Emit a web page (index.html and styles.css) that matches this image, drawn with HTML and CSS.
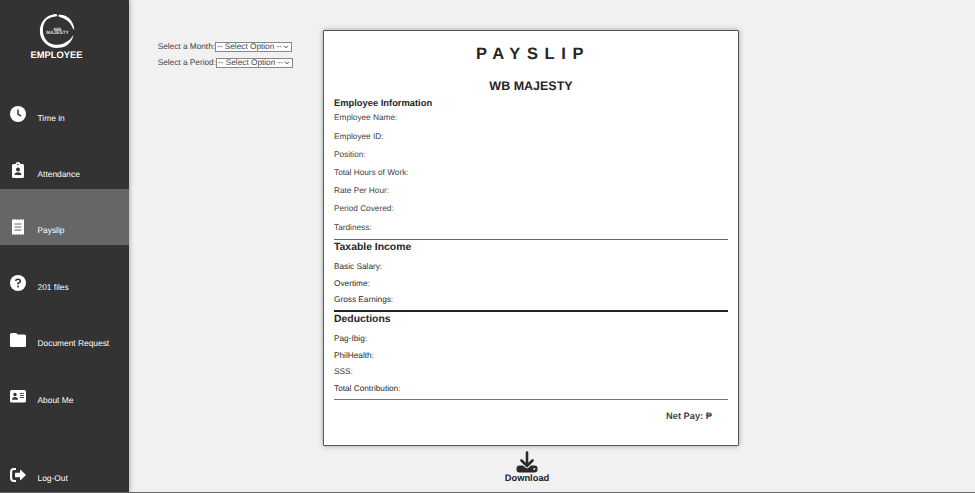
FILE: index.html
```html
<!DOCTYPE html>
<html lang="en">
<head>
<meta charset="utf-8">
<title>Payslip</title>
<link rel="stylesheet" href="styles.css">
</head>
<body>
<aside class="sidebar">
  <div class="brand">
    <svg class="logo" viewBox="0 0 36 36">
      <path fill="#fff" d="M18 .2L15 0 14 .6Q8 2 5 5.500Q1 10 .4 16Q.2 23 3.500 27.500Q9 34.500 17 35L20 34.700Q26 34.500 29.500 31Q34 27 35 21.500Q32 26.500 28 28.500Q24 31.500 19 31.500Q11 32 7 27Q3 22 3.500 15Q4 9 8 5.500Q12 2.500 18 2.200ZM19.500 .8Q26 0 31 5Q35.500 10 35.800 16.500L34 14.500Q32 9 28 6.500Q25 4 19.500 2.500Z"/>
      <text x="18.500" y="17.200">WB</text><text x="18.500" y="21">MAJESTY</text>
    </svg>
    <div class="role">EMPLOYEE</div>
  </div>
  <nav>
    <a class="item"><svg class="icon" viewBox="0 0 16 16"><circle cx="8" cy="8" r="8" fill="#fff"/><path d="M8 3.500V8l3 2.200" fill="none" stroke="#333" stroke-width="1.500"/></svg><span>Time in</span></a>
    <a class="item"><svg class="icon" viewBox="0 0 16 16"><path fill="#fff" d="M3.500 2H5.500Q6 0 8 0t2.500 2h2Q14 2 14 3.500v11q0 1.500-1.500 1.500h-9Q2 16 2 14.500v-11Q2 2 3.500 2Z"/><circle cx="8" cy="2.500" r=".8" fill="#333"/><circle cx="8" cy="7.500" r="2" fill="#333"/><path d="M4.500 13q.3-2.800 3.500-2.800T11.500 13Z" fill="#333"/></svg><span>Attendance</span></a>
    <a class="item active"><svg class="icon" viewBox="0 0 16 16"><path fill="#fff" d="M2 0l1.500 1L5 0l1.500 1L8 0l1.500 1L11 0l1.500 1L14 0v16l-1.500-1-1.500 1-1.500-1L8 16l-1.500-1L5 16l-1.500-1L2 16Z"/><path d="M4.500 5h7M4.500 8h7M4.500 11h7" stroke="#666" stroke-width="1.200"/></svg><span>Payslip</span></a>
    <a class="item"><svg class="icon" viewBox="0 0 16 16"><circle cx="8" cy="8" r="8" fill="#fff"/><path d="M5.800 6Q5.800 4.300 8 4.300t2.300 1.900Q10.300 7.500 8 8.200V9.400" fill="none" stroke="#333" stroke-width="1.600"/><circle cx="8" cy="11.500" r="1" fill="#333"/></svg><span>201 files</span></a>
    <a class="item"><svg class="icon" viewBox="0 0 16 16"><path fill="#fff" d="M1.500 1H6l2 1.500h6.500Q16 2.500 16 4v9.500q0 1.500-1.500 1.500h-13Q0 15 0 13.500v-11Q0 1 1.500 1Z"/></svg><span>Document Request</span></a>
    <a class="item"><svg class="icon" viewBox="0 0 16 16"><rect y="2" width="16" height="12.500" rx="1.500" fill="#fff"/><circle cx="5" cy="6.500" r="1.700" fill="#333"/><path d="M2 11.700Q2 9 5 9t3 2.700Z" fill="#333"/><path d="M9.800 5.500H14M9.800 7.500H14M9.800 9.500H14" stroke="#555" stroke-width="1"/></svg><span>About Me</span></a>
  </nav>
  <a class="item logout"><svg class="icon" viewBox="0 0 16 16"><path d="M6 2H4Q1.100 2 1.100 5v6q0 3 2.900 3h2" fill="none" stroke="#fff" stroke-width="2.100"/><path fill="#fff" d="M5.500 5.800H10V3.300q0-1 .8-.4L16 8l-5.200 5.100q-.8.600-.8-.4V10.200H5.500Q5 10.200 5 9.700v-3.400Q5 5.800 5.500 5.800Z"/></svg><span>Log-Out</span></a>
</aside>
<main>
  <section class="filters">
    <div class="filter"><label>Select a Month:</label><div class="select"><span>-- Select Option --</span><svg viewBox="0 0 6 4"><path d="M1 .8l2 2 2-2" fill="none" stroke="#444"/></svg></div></div>
    <div class="filter period"><label>Select a Period:</label><div class="select"><span>-- Select Option --</span><svg viewBox="0 0 6 4"><path d="M1 .8l2 2 2-2" fill="none" stroke="#444"/></svg></div></div>
  </section>
  <section class="document">
    <article class="payslip">
      <h1>PAYSLIP</h1>
      <h2>WB MAJESTY</h2>
      <h3>Employee Information</h3>
      <div class="info">
        <p>Employee Name:</p><p>Employee ID:</p><p>Position:</p><p>Total Hours of Work:</p><p>Rate Per Hour:</p><p>Period Covered:</p><p>Tardiness:</p>
      </div>
      <div class="group income">
        <h4>Taxable Income</h4>
        <p>Basic Salary:</p><p>Overtime:</p><p>Gross Earnings:</p>
      </div>
      <div class="group deductions">
        <h4>Deductions</h4>
        <p>Pag-Ibig:</p><p>PhilHealth:</p><p>SSS:</p><p>Total Contribution:</p>
      </div>
      <div class="net">Net Pay: ₱</div>
    </article>
    <div class="download">
      <svg viewBox="0 0 22 22"><path d="M11 1.500V14M5.500 9.500L11 15l5.500-5.500" fill="none" stroke="#292929" stroke-width="2.600" stroke-linecap="round"/><path fill="#292929" d="M3.500 14.500H7l2.500 2.300q1.500 1 3 0L15 14.500h3.500q3 0 3 3v.8q0 3.200-3 3.200h-15q-3 0-3-3.200v-.8q0-3 3-3Z"/><circle cx="18.300" cy="18" r="1" fill="#eee"/></svg>
      <span>Download</span>
    </div>
  </section>
</main>
</body>
</html>
```

FILE: styles.css
```css
* { box-sizing: border-box; }
body {
  margin: 0;
  height: 493px;
  display: flex;
  overflow: hidden;
  background: #f1f1f1;
  border-bottom: 1px solid #65656a;
  font-family: "Liberation Sans", Arial, sans-serif;
  font-size: 8.25px;
  color: #444;
  text-rendering: geometricPrecision;
}
h1, h2, h3, h4, p { margin: 0; }
svg { display: block; }

.sidebar {
  width: 129px;
  flex: none;
  display: flex;
  flex-direction: column;
  background: #333;
  color: #fff;
  box-shadow: 0 0 5px rgba(0, 0, 0, .4);
}
.brand {
  height: 76px;
  flex: none;
  padding: 14px 16px 0 0;
  display: flex;
  flex-direction: column;
  align-items: center;
}
.logo { width: 36px; height: 35px; }
.logo text { font-size: 4.9px; font-weight: bold; fill: #ddd; text-anchor: middle; }
.role { font-size: 9.4px; font-weight: bold; line-height: 12px; }
.item {
  height: 56.4px;
  padding: 30px 0 0 9.5px;
  display: flex;
  gap: 12px;
}
.item span { font-size: 8.4px; line-height: 10px; padding-top: 6.6px; }
.active { background: #666; }
.icon { width: 16px; height: 16px; flex: none; }
.logout { margin-top: 22.4px; height: auto; }

main { flex: 1; display: flex; }
.filters { width: 194px; flex: none; padding: 42px 0 0 28.7px; }
.filter { display: flex; height: 10px; line-height: 10px; margin-bottom: 5.5px; }
.filter label { width: 57.3px; white-space: nowrap; }
.period label { width: 58.3px; }
.select {
  width: 77px;
  padding: 0 2px 0 1px;
  display: flex;
  align-items: center;
  justify-content: space-between;
  border: 1px solid #888;
  background: #fff;
  white-space: nowrap;
}
.select svg { width: 6px; height: 4px; }

.document { width: 416px; padding-top: 30px; }
.payslip {
  height: 416px;
  padding: 13px 10px 0;
  background: #fff;
  border: 1px solid #555;
  border-radius: 1px;
  box-shadow: 0 0 5px rgba(0, 0, 0, .35);
  color: #444;
}
h1, h2, h3, h4 { color: #252525; }
h1 { font-size: 16.5px; line-height: 20px; letter-spacing: 6.6px; text-align: center; padding-left: 4px; }
h2 { font-size: 12.5px; line-height: 16px; margin-top: 14px; text-align: center; }
h3 { font-size: 9.35px; line-height: 12px; margin-top: 3px; }
.info { padding-top: 1.4px; height: 131px; border-bottom: 1px solid #666; }
.info p { height: 18.2px; line-height: 16px; }
.group { color: #2c2c2c; }
.group h4 { font-size: 10.4px; line-height: 16px; margin-bottom: 3px; }
.group p { height: 16.6px; line-height: 16px; }
.income { height: 72px; border-bottom: 2px solid #222; }
.deductions { height: 88px; border-bottom: 1px solid #777; }
.net { margin: 11px 16px 0 0; text-align: right; font-size: 9.3px; font-weight: bold; line-height: 11px; }
.download {
  display: flex;
  flex-direction: column;
  align-items: center;
  padding: 5px 8px 0 0;
  color: #252525;
  font-size: 9.35px;
  font-weight: bold;
  line-height: 10px;
}
.download svg { width: 22px; height: 22px; }
```
